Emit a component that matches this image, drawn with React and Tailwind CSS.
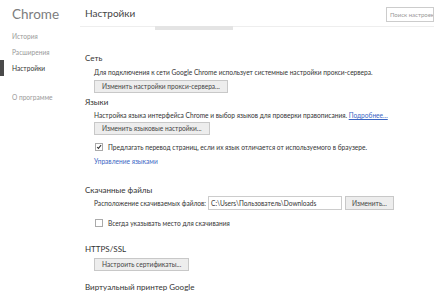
export default function App() {
  const font = { fontFamily: 'Lato, "Open Sans", "Noto Sans", sans-serif' };
  const btn = "h-[13px] px-[7px] border border-[#c8c8c8] bg-[#ededed] text-[6.6px] leading-[11px] whitespace-nowrap text-[#444]";
  return (
    <div className="w-[434px] h-[298px] bg-white overflow-hidden flex text-[#333] leading-[10px]" style={font}>
      {/* Sidebar */}
      <div className="w-[80px] shrink-0 flex flex-col pt-[5px]">
        <div className="pl-[12px] text-[13.5px] leading-[18px] text-[#7d7d7d]">Chrome</div>
        <div className="mt-[5px] pl-[12px] text-[6.6px] leading-[16px] text-[#999]">История</div>
        <div className="pl-[12px] text-[6.6px] leading-[16px] text-[#999]">Расширения</div>
        <div className="flex items-center h-[16px]">
          <div className="w-[4px] h-[16px] bg-[#4a4a4a]"></div>
          <div className="pl-[8px] text-[6.6px] text-[#333]">Настройки</div>
        </div>
        <div className="mt-[13px] pl-[12px] text-[6.6px] leading-[16px] text-[#999]">О программе</div>
      </div>
      {/* Main */}
      <div className="flex-1 flex flex-col">
        <div className="h-[27px] shrink-0 flex items-start justify-between border-b border-[#eee] relative">
          <div className="pl-[5px] pt-[4px] text-[10px] leading-[18px] text-[#444]">Настройки</div>
          <div className="mt-[7px] w-[48px] h-[15px] border border-[#ccc] text-[6px] leading-[13px] text-[#999] pl-[3px] whitespace-nowrap overflow-hidden">Поиск настроек</div>
          <div className="absolute left-[75px] top-[26px] w-[78px] h-[4px] bg-[#e4e4e4]"></div>
        </div>
        <div className="pl-[5px] pt-[25px] flex flex-col">
          <div className="text-[8px] leading-[12px]">Сеть</div>
          <div className="pl-[9px] mt-[3px] text-[6.6px] leading-[10px] whitespace-nowrap">Для подключения к сети Google Chrome использует системные настройки прокси-сервера.</div>
          <div className="pl-[9px] mt-[3px] flex">
            <div className={btn}>Изменить настройки прокси-сервера...</div>
          </div>

          <div className="mt-[3px] text-[8px] leading-[12px]">Языки</div>
          <div className="pl-[9px] mt-[2px] text-[6.6px] leading-[10px] whitespace-nowrap">Настройка языка интерфейса Chrome и выбор языков для проверки правописания. <span className="text-[#3a66c4] underline">Подробнее...</span></div>
          <div className="pl-[9px] mt-[2px] flex">
            <div className={btn}>Изменить языковые настройки...</div>
          </div>
          <div className="pl-[10px] mt-[7px] flex items-center gap-[5px] text-[6.6px] leading-[10px] whitespace-nowrap">
            <div className="w-[8px] h-[8px] border border-[#aaa] bg-white flex items-center justify-center">
              <svg width="8" height="8" viewBox="0 0 8 8"><path d="M1.5 4 L3.2 5.8 L6.8 1.5" stroke="#333" strokeWidth="1.4" fill="none" /></svg>
            </div>
            <span>Предлагать перевод страниц, если их язык отличается от используемого в браузере.</span>
          </div>
          <div className="pl-[9px] mt-[4px] text-[6.6px] leading-[10px] text-[#3a66c4]">Управление языками</div>

          <div className="mt-[18px] text-[8px] leading-[12px]">Скачанные файлы</div>
          <div className="pl-[9px] flex items-center text-[6.6px] whitespace-nowrap">
            <span>Расположение скачиваемых файлов:</span>
            <div className="ml-[2px] w-[134px] h-[14px] border border-[#ccc] pl-[2px] leading-[12px] overflow-hidden">C:\Users\Пользователь\Downloads</div>
            <div className="ml-[3px] h-[14px] px-[6px] border border-[#c8c8c8] bg-[#ededed] leading-[12px] text-[#444]">Изменить...</div>
          </div>
          <div className="pl-[10px] mt-[8px] flex items-center gap-[5px] text-[6.6px] leading-[10px] whitespace-nowrap">
            <div className="w-[8px] h-[8px] border border-[#aaa] bg-white"></div>
            <span>Всегда указывать место для скачивания</span>
          </div>

          <div className="mt-[15px] text-[8px] leading-[12px]">HTTPS/SSL</div>
          <div className="pl-[9px] mt-[3px] flex">
            <div className={btn}>Настроить сертификаты...</div>
          </div>

          <div className="mt-[10px] text-[8px] leading-[12px]">Виртуальный принтер Google</div>
        </div>
      </div>
    </div>
  );
}
